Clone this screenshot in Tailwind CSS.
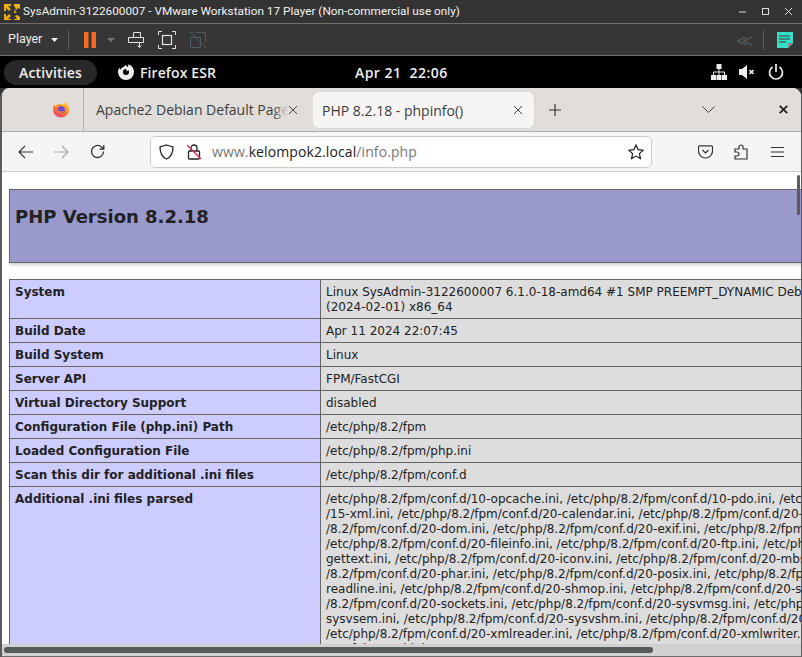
<!DOCTYPE html>
<html><head><meta charset="utf-8"><script src="https://cdn.jsdelivr.net/npm/@tailwindcss/browser@4"></script></head>
<body class="w-[802px] h-[657px] overflow-hidden bg-[#333333] relative font-['Open_Sans',sans-serif]">
<!-- VMware title bar -->
<div class="h-[24px] flex items-center bg-[#333333] border-b border-[#6e6e6e] pl-[4px] pr-[9px] text-[#f2f2f2]">
  <svg width="16" height="16" viewBox="0 0 16 16" class="shrink-0"><path d="M0 0h7v2H4l3 3-2 2-3-3v3H0zM16 0v5l-2-1-3 3 2 2h-3V7l2-2-2-3V0zM0 16v-6h2v3l3-3 2 2-3 3h3v1zM16 16h-6v-1h3l-2-3 2-1 3 2z" fill="#eeac16"/></svg>
  <span class="ml-[3px] text-[11.8px] font-['Roboto',sans-serif] whitespace-nowrap">SysAdmin-3122600007 - VMware Workstation 17 Player (Non-commercial use only)</span>
  <div class="ml-auto flex items-center gap-[14px]">
    <svg width="9" height="9" viewBox="0 0 9 9"><path d="M1 5h7" stroke="#ddd"/></svg>
    <svg width="9" height="9" viewBox="0 0 9 9"><rect x="1.5" y="1.5" width="6" height="6" fill="none" stroke="#ddd"/></svg>
    <svg width="9" height="9" viewBox="0 0 9 9"><path d="M1 1l7 7M8 1l-7 7" stroke="#ddd"/></svg>
  </div>
</div>
<!-- VMware toolbar -->
<div class="h-[32px] flex items-center bg-[#363636] border-b border-[#6e6e6e] pl-[8px] pr-[9px] text-[#eeeeee]">
  <span class="text-[12.5px] font-['Roboto',sans-serif]">Player</span>
  <svg width="7" height="4" viewBox="0 0 7 4" class="ml-[9px]"><path d="M0 0h7L3.500 4z" fill="#eee"/></svg>
  <div class="w-px h-[20px] bg-[#5a5a5a] ml-[10px]"></div>
  <svg width="12" height="16" viewBox="0 0 12 16" class="ml-[15px]"><path d="M0 0h4.500v16H0zM7.500 0H12v16H7.500z" fill="#f26a21"/></svg>
  <svg width="8" height="4" viewBox="0 0 8 4" class="ml-[11px]"><path d="M0 0h8L4 4z" fill="#777"/></svg>
  <svg width="17" height="18" viewBox="0 0 17 18" class="ml-[13px]" fill="none" stroke="#e4e4e4"><path d="M5.500 1.500h7v5h-7zM.5 6.500h15v5H.5zM11.500 12v4M9.500 14.500l2 2 2-2"/></svg>
  <svg width="18" height="18" viewBox="0 0 18 18" class="ml-[13px]" fill="none" stroke="#e4e4e4"><path d="M.5 4V.5H4M14 .5h3.500V4M17.500 14v3.500H14M4 17.500H.5V14"/><rect x="4.500" y="4.500" width="9" height="9" stroke-width="1.200"/></svg>
  <svg width="18" height="18" viewBox="0 0 18 18" class="ml-[13px]" fill="none" stroke="#4e5a60"><path d="M6.500 1.500h10v10M1.500 6.500h10v10h-10zM1 1l16 16"/></svg>
  <div class="ml-auto flex items-center">
    <span class="text-[#4e5a60] text-[16px] leading-none">≪</span>
    <div class="w-px h-[20px] bg-[#5a5a5a] ml-[10px]"></div>
    <svg width="16" height="16" viewBox="0 0 16 16" class="ml-[13px]"><path d="M0 0h16v11l-5 5H0z" fill="#36dcc6"/><path d="M2 4h11M2 7h11M2 10h7" stroke="#333"/><path d="M11 16v-5h5z" fill="#888"/></svg>
  </div>
</div>
<!-- GNOME top bar -->
<div class="h-[32px] flex items-center bg-black text-[#eeeeee] relative text-[14px] font-semibold">
  <div class="ml-[4px] w-[93px] h-[25px] rounded-full bg-[#282828] flex items-center justify-center tracking-[0.15px]">Activities</div>
  <svg width="16" height="16" viewBox="0 0 16 16" class="ml-[21px]"><path fill-rule="evenodd" fill="#eee" d="M10 .3C13.500 1.200 16 4.300 16 8A8 8 0 0 1 0 8c0-1.700.5-3.300 1.500-4.600 0 1 .3 1.800 1 2.400C3 3.800 4.500 3 6 3c.3-1 1-1.600 2-2 .2 1 .8 1.500 1.500 2 1-.5 1-1.600.5-2.700zM8 5a3 3 0 1 0 3 3c0-.8-.3-1.500-.8-2L9 7.500C8.600 7 8.500 6 8 5z"/></svg>
  <span class="ml-[6px] tracking-[0.1px]">Firefox ESR</span>
  <span class="absolute left-[355px] top-[6px] tracking-[0.45px]">Apr 21&nbsp;&nbsp;22:06</span>
  <div class="ml-auto flex items-center pr-[18px]">
    <svg width="16" height="16" viewBox="0 0 16 16" fill="#eee"><path d="M5.500 0h5v5h-5zM0 11h5v5H0zM5.500 11h5v5h-5zM11 11h5v5h-5z"/><path d="M8 5v3M2.500 11V8h11v3M8 8v3" stroke="#eee" fill="none"/></svg>
    <svg width="16" height="16" viewBox="0 0 16 16" class="ml-[12px]" fill="#eee"><path d="M0 5h3l5-4v14l-5-4H0z"/><path d="M10.500 6l4 4M14.500 6l-4 4" stroke="#eee" stroke-width="1.700"/></svg>
    <svg width="16" height="16" viewBox="0 0 16 16" class="ml-[13px]" fill="none" stroke="#eee" stroke-width="1.700"><path d="M8 0v8M4.500 3a6.500 6.500 0 1 0 7 0"/></svg>
  </div>
</div>
<!-- Firefox window -->
<div class="h-[569px] bg-white rounded-t-[9px] border-l-2 border-r border-[#5a5a5a] overflow-hidden relative">
  <!-- tab strip -->
  <div class="h-[44px] bg-[#e0dddb] border-b border-[#b0aeab] flex items-stretch text-[14px] text-[#3d3d3d]">
    <div class="w-[82px] border-r border-[#b5b3b0] flex items-center justify-end pr-[14px]">
      <svg width="16" height="17" viewBox="0 0 16 17"><defs><linearGradient id="ff" x1="0.8" y1="0" x2="0.2" y2="1"><stop offset="0" stop-color="#ffd23f"/><stop offset="0.45" stop-color="#ff8a1e"/><stop offset="1" stop-color="#f2367f"/></linearGradient></defs><path d="M11 .5c2.800 1.500 5 4.300 5 8a8 8 0 0 1-16 0c0-2.200.8-3.800 1.500-4.800.2.800.5 1.200 1 1.500C3.500 3.500 5.500 2.800 7 3c1.500.2 3 .6 4 .5.800-.6.500-2 0-3z" fill="url(#ff)"/><circle cx="8.300" cy="8.800" r="3.600" fill="#6b45d6"/><path d="M5 8.500c1 2 4 3 6.500.5-.3 2-2 3.500-3.800 3.300C6 12.200 4.800 10.400 5 8.500z" fill="#f8862a"/></svg>
    </div>
    <div class="w-[229px] flex items-center pl-[12px] relative whitespace-nowrap overflow-hidden">
      <span>Apache2 Debian Default Page</span>
      <div class="absolute right-0 top-0 bottom-0 w-[41px] flex items-center justify-end pr-[15px] bg-gradient-to-r from-[#e0dddb00] to-[#e0dddb] to-[40%]">
        <svg width="10" height="10" viewBox="0 0 10 10"><path d="M1 1l8 8M9 1l-8 8" stroke="#444"/></svg>
      </div>
    </div>
    <div class="w-[221px] mt-[4px] mb-[3px] bg-[#f6f5f4] rounded-[5px] shadow-[0_0_1px_#999] flex items-center pl-[9px] pr-[11px] justify-between whitespace-nowrap">
      <span>PHP 8.2.18 - phpinfo()</span>
      <svg width="10" height="10" viewBox="0 0 10 10"><path d="M1 1l8 8M9 1l-8 8" stroke="#444"/></svg>
    </div>
    <div class="flex items-center ml-[15px]"><svg width="12" height="12" viewBox="0 0 12 12"><path d="M6 0v12M0 6h12" stroke="#333" stroke-width="1.200"/></svg></div>
    <div class="flex items-center ml-[141px]"><svg width="13" height="7" viewBox="0 0 13 7" fill="none"><path d="M.5.5l6 6 6-6" stroke="#444"/></svg></div>
    <div class="flex items-center ml-[64px]"><svg width="9" height="9" viewBox="0 0 9 9"><path d="M.8.800l7.400 7.400M8.200.800L.8 8.200" stroke="#222" stroke-width="1.900"/></svg></div>
  </div>
  <!-- nav bar -->
  <div class="h-[40px] bg-[#f6f5f4] border-b border-[#cfccc8] flex items-center">
    <svg width="15" height="14" viewBox="0 0 15 14" class="ml-[16px]" fill="none" stroke="#333" stroke-width="1.200"><path d="M15 7H1M7 1L1 7l6 6"/></svg>
    <svg width="15" height="14" viewBox="0 0 15 14" class="ml-[21px]" fill="none" stroke="#aaa" stroke-width="1.200"><path d="M0 7h14M8 1l6 6-6 6"/></svg>
    <svg width="15" height="15" viewBox="0 0 15 15" class="ml-[21px]" fill="none" stroke="#333" stroke-width="1.300"><path d="M13.500 7.500a6 6 0 1 1-2-4.500l2 2M13.800 1v4.200H9.500"/></svg>
    <div class="ml-[45px] w-[502px] h-[32px] bg-white border border-[#cfccc8] rounded-[5px] flex items-center text-[14px]">
      <svg width="15" height="16" viewBox="0 0 15 16" class="ml-[8px]" fill="none" stroke="#222" stroke-width="1.300"><path d="M7.500 1L14 3c0 6-1.500 10-6.500 12C2.500 13 1 9 1 3z"/></svg>
      <svg width="14" height="16" viewBox="0 0 14 16" class="ml-[13px]" fill="none"><rect x="1.500" y="7" width="11" height="8" rx="1" stroke="#222" stroke-width="1.300"/><path d="M4 7V4a3 3 0 0 1 6 0v3" stroke="#222" stroke-width="1.300"/><path d="M0 1l14 14" stroke="#e22850" stroke-width="1.300"/></svg>
      <span class="ml-[11px] text-[#777777] tracking-[0.1px]">www.<span class="text-[#222222]">kelompok2.local</span>/info.php</span>
      <svg width="16" height="16" viewBox="0 0 16 16" class="ml-auto mr-[7px]" fill="none" stroke="#222" stroke-width="1.200"><path d="M8 1l2.100 4.600 5 .6-3.700 3.400 1 5L8 12.100 3.600 14.600l1-5L.9 6.200l5-.6z"/></svg>
    </div>
    <svg width="15" height="14" viewBox="0 0 15 14" class="ml-[46px]" fill="none" stroke="#333" stroke-width="1.200"><path d="M1.500.8h12a1 1 0 0 1 1 1V6a7 7 0 0 1-14 0V1.800a1 1 0 0 1 1-1zM4.500 5l3 3 3-3"/></svg>
    <svg width="15" height="16" viewBox="0 0 15 16" class="ml-[21px]" fill="none" stroke="#333" stroke-width="1.200"><path d="M1 5h4V3a2 2 0 1 1 4 0v2h4v10H1v-3h2a2 2 0 1 0 0-4H1z"/></svg>
    <svg width="13" height="10" viewBox="0 0 13 10" class="ml-[22px]" stroke="#333" stroke-width="1.100"><path d="M0 .5h13M0 5h13M0 9.500h13"/></svg>
  </div>
  <!-- page -->
  <div class="h-[472px] bg-white overflow-hidden pt-[17px] pl-[7px] font-['DejaVu_Sans',sans-serif] text-[#222222] relative">
    <div class="w-[1000px] h-[74px] bg-[#9999cc] border border-[#666666] shadow-[1px_2px_3px_#ccc] px-[5px] pt-[14px]">
      <h1 class="text-[18px] font-bold leading-[25px]">PHP Version 8.2.18</h1>
    </div>
    <table class="mt-[16px] w-[1000px] border-collapse text-[12px] leading-[15px] table-fixed">
      <colgroup><col class="w-[311px]"><col></colgroup>
      <tbody>
        <tr class="align-top"><td class="bg-[#ccccff] border border-[#666666] font-bold px-[5px] pt-[5px] pb-[3px]">System</td><td class="bg-[#dddddd] border border-[#666666] px-[5px] pt-[5px] pb-[3px] whitespace-nowrap">Linux SysAdmin-3122600007 6.1.0-18-amd64 #1 SMP PREEMPT_DYNAMIC Debian 6.1.76-1<br>(2024-02-01) x86_64</td></tr>
        <tr class="align-top"><td class="bg-[#ccccff] border border-[#666666] font-bold px-[5px] pt-[5px] pb-[3px]">Build Date</td><td class="bg-[#dddddd] border border-[#666666] px-[5px] pt-[5px] pb-[3px]">Apr 11 2024 22:07:45</td></tr>
        <tr class="align-top"><td class="bg-[#ccccff] border border-[#666666] font-bold px-[5px] pt-[5px] pb-[3px]">Build System</td><td class="bg-[#dddddd] border border-[#666666] px-[5px] pt-[5px] pb-[3px]">Linux</td></tr>
        <tr class="align-top"><td class="bg-[#ccccff] border border-[#666666] font-bold px-[5px] pt-[5px] pb-[3px]">Server API</td><td class="bg-[#dddddd] border border-[#666666] px-[5px] pt-[5px] pb-[3px]">FPM/FastCGI</td></tr>
        <tr class="align-top"><td class="bg-[#ccccff] border border-[#666666] font-bold px-[5px] pt-[5px] pb-[3px]">Virtual Directory Support</td><td class="bg-[#dddddd] border border-[#666666] px-[5px] pt-[5px] pb-[3px]">disabled</td></tr>
        <tr class="align-top"><td class="bg-[#ccccff] border border-[#666666] font-bold px-[5px] pt-[5px] pb-[3px]">Configuration File (php.ini) Path</td><td class="bg-[#dddddd] border border-[#666666] px-[5px] pt-[5px] pb-[3px]">/etc/php/8.2/fpm</td></tr>
        <tr class="align-top"><td class="bg-[#ccccff] border border-[#666666] font-bold px-[5px] pt-[5px] pb-[3px]">Loaded Configuration File</td><td class="bg-[#dddddd] border border-[#666666] px-[5px] pt-[5px] pb-[3px]">/etc/php/8.2/fpm/php.ini</td></tr>
        <tr class="align-top"><td class="bg-[#ccccff] border border-[#666666] font-bold px-[5px] pt-[5px] pb-[3px]">Scan this dir for additional .ini files</td><td class="bg-[#dddddd] border border-[#666666] px-[5px] pt-[5px] pb-[3px]">/etc/php/8.2/fpm/conf.d</td></tr>
        <tr class="align-top"><td class="bg-[#ccccff] border border-[#666666] font-bold px-[5px] pt-[5px] pb-[3px]">Additional .ini files parsed</td><td class="bg-[#dddddd] border border-[#666666] px-[5px] pt-[5px] pb-[3px] whitespace-nowrap">/etc/php/8.2/fpm/conf.d/10-opcache.ini, /etc/php/8.2/fpm/conf.d/10-pdo.ini, /etc/php/8.2/fpm/conf.d<br>/15-xml.ini, /etc/php/8.2/fpm/conf.d/20-calendar.ini, /etc/php/8.2/fpm/conf.d/20-ctype.ini, /etc/php<br>/8.2/fpm/conf.d/20-dom.ini, /etc/php/8.2/fpm/conf.d/20-exif.ini, /etc/php/8.2/fpm/conf.d/20-ffi.ini,<br>/etc/php/8.2/fpm/conf.d/20-fileinfo.ini, /etc/php/8.2/fpm/conf.d/20-ftp.ini, /etc/php/8.2/fpm/conf.d/20-<br>gettext.ini, /etc/php/8.2/fpm/conf.d/20-iconv.ini, /etc/php/8.2/fpm/conf.d/20-mbstring.ini, /etc/php<br>/8.2/fpm/conf.d/20-phar.ini, /etc/php/8.2/fpm/conf.d/20-posix.ini, /etc/php/8.2/fpm/conf.d/20-<br>readline.ini, /etc/php/8.2/fpm/conf.d/20-shmop.ini, /etc/php/8.2/fpm/conf.d/20-simplexml.ini, /etc/php<br>/8.2/fpm/conf.d/20-sockets.ini, /etc/php/8.2/fpm/conf.d/20-sysvmsg.ini, /etc/php/8.2/fpm/conf.d/20-<br>sysvsem.ini, /etc/php/8.2/fpm/conf.d/20-sysvshm.ini, /etc/php/8.2/fpm/conf.d/20-tokenizer.ini, /etc<br>/etc/php/8.2/fpm/conf.d/20-xmlreader.ini, /etc/php/8.2/fpm/conf.d/20-xmlwriter.ini, /etc/php/8.2/fpm<br>/conf.d/20-xsl.ini</td></tr>
      </tbody>
    </table>
    <div class="absolute right-[1px] top-[3px] w-[3px] h-[40px] bg-[#5c5c5c] rounded-full"></div>
  </div>
  <!-- horizontal scrollbar -->
  <div class="h-[13px] bg-[#d0d0d0] border-b border-[#6e6e6e] pt-[3px] pl-[2px]">
    <div class="w-[649px] h-[6px] bg-[#555a5a] rounded-full"></div>
  </div>
</div>
</body></html>
